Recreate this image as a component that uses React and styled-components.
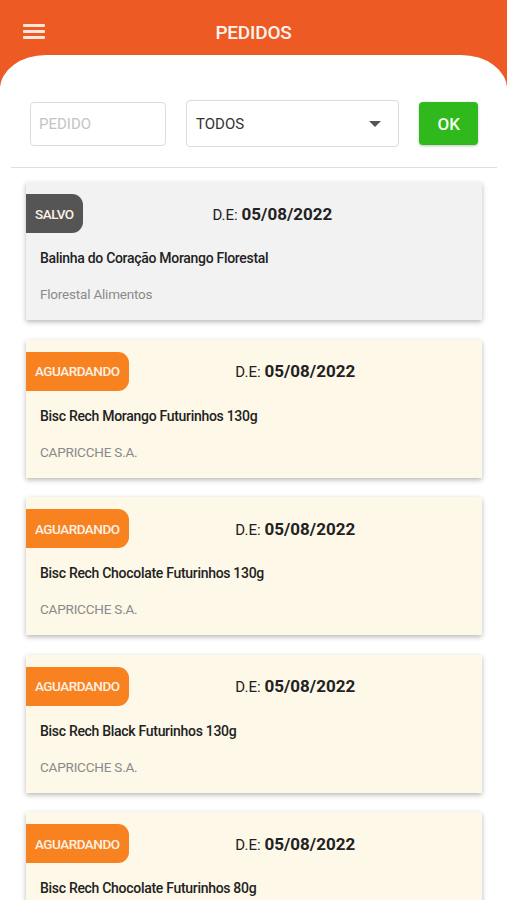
import React from "react";
import styled, { createGlobalStyle } from "styled-components";

const GlobalStyle = createGlobalStyle`
  html, body {
    margin: 0;
    padding: 0;
    background: #ffffff;
  }
  body {
    font-family: Roboto, "Noto Sans", sans-serif;
  }
  * {
    box-sizing: border-box;
  }
`;

const orders = [
  { status: "SALVO", date: "05/08/2022", product: "Balinha do Coração Morango Florestal", company: "Florestal Alimentos" },
  { status: "AGUARDANDO", date: "05/08/2022", product: "Bisc Rech Morango Futurinhos 130g", company: "CAPRICCHE S.A." },
  { status: "AGUARDANDO", date: "05/08/2022", product: "Bisc Rech Chocolate Futurinhos 130g", company: "CAPRICCHE S.A." },
  { status: "AGUARDANDO", date: "05/08/2022", product: "Bisc Rech Black Futurinhos 130g", company: "CAPRICCHE S.A." },
  { status: "AGUARDANDO", date: "05/08/2022", product: "Bisc Rech Chocolate Futurinhos 80g", company: "CAPRICCHE S.A." },
];

const App = () => {
  return (
    <>
      <GlobalStyle />
      <Page>
        <TopBar>
          <MenuButton aria-label="menu">
            <span />
            <span />
            <span />
          </MenuButton>
          <Title>PEDIDOS</Title>
        </TopBar>
        <Sheet>
          <Filters>
            <OrderInput placeholder="PEDIDO" />
            <Select>
              <span>TODOS</span>
              <Caret />
            </Select>
            <OkButton>OK</OkButton>
          </Filters>
          <Divider />
          <List>
            {orders.map((order, i) => (
              <Card key={i} $saved={order.status === "SALVO"}>
                <CardHead>
                  <Badge $saved={order.status === "SALVO"}>{order.status}</Badge>
                  <DateLine>
                    <small>D.E:</small> <strong>{order.date}</strong>
                  </DateLine>
                </CardHead>
                <Product>{order.product}</Product>
                <Company>{order.company}</Company>
              </Card>
            ))}
          </List>
        </Sheet>
      </Page>
    </>
  );
};

const Page = styled.div`
  height: 900px;
  overflow: hidden;
  background: #ee5a24;
  display: flex;
  flex-direction: column;
`;

const TopBar = styled.header`
  flex-shrink: 0;
  height: 55px;
  padding-top: 9px;
  display: flex;
  align-items: center;
  position: relative;
`;

const MenuButton = styled.div`
  position: absolute;
  left: 23px;
  top: 24px;
  display: flex;
  flex-direction: column;
  gap: 3px;
  span {
    display: block;
    width: 22px;
    height: 3px;
    border-radius: 1px;
    background: #fde7dc;
  }
`;

const Title = styled.h1`
  flex: 1;
  margin: 0;
  text-align: center;
  color: #fff4ee;
  font-size: 19px;
  font-weight: 500;
  letter-spacing: -0.2px;
`;

const Sheet = styled.main`
  flex-shrink: 0;
  background: #ffffff;
  border-radius: 46px 46px 0 0 / 34px 34px 0 0;
  padding-top: 45px;
`;

const Filters = styled.div`
  display: flex;
  align-items: center;
  padding: 0 29px 0 30px;
  gap: 20px;
`;

const OrderInput = styled.input`
  width: 136px;
  height: 44px;
  border: 1.5px solid #dcdcdc;
  border-radius: 4px;
  padding: 0 8px;
  font-family: Roboto, sans-serif;
  font-size: 15px;
  color: #333;
  outline: none;
  &::placeholder {
    color: #c4c4c4;
  }
`;

const Select = styled.div`
  width: 215px;
  height: 47px;
  border: 1.5px solid #dcdcdc;
  border-radius: 4px;
  padding: 0 17px 0 9px;
  display: flex;
  align-items: center;
  justify-content: space-between;
  font-size: 15px;
  color: #333;
`;

const Caret = styled.span`
  width: 0;
  height: 0;
  border-left: 6px solid transparent;
  border-right: 6px solid transparent;
  border-top: 6px solid #555;
`;

const OkButton = styled.button`
  width: 59px;
  height: 43px;
  border: none;
  border-radius: 4px;
  background: #2fb91c;
  color: #f4fff0;
  font-family: Roboto, sans-serif;
  font-size: 17px;
  font-weight: 500;
  box-shadow: 0 1px 3px rgba(0, 0, 0, 0.25);
`;

const Divider = styled.hr`
  margin: 20px 10px 0 11px;
  border: none;
  border-top: 1px solid #dedede;
`;

const List = styled.div`
  display: flex;
  flex-direction: column;
  gap: 19.5px;
  padding: 14px 25px 0 26px;
`;

const Card = styled.article`
  height: 138px;
  background: ${(p) => (p.$saved ? "#f2f2f2" : "#fdf8e8")};
  box-shadow: 0 2px 5px rgba(0, 0, 0, 0.28);
  padding-top: 12px;
  display: flex;
  flex-direction: column;
`;

const CardHead = styled.div`
  display: flex;
  align-items: center;
  height: 39px;
`;

const Badge = styled.span`
  height: 39px;
  padding: 0 9px 0 9px;
  display: flex;
  align-items: center;
  border-radius: 0 11px 11px 0;
  background: ${(p) => (p.$saved ? "#555555" : "#f7821f")};
  color: #fdf1e6;
  font-size: 13.5px;
  font-weight: 500;
  letter-spacing: -0.5px;
`;

const DateLine = styled.div`
  flex: 1;
  text-align: center;
  padding-right: 20px;
  color: #222;
  small {
    font-size: 15px;
  }
  strong {
    font-size: 17px;
    font-weight: 700;
  }
`;

const Product = styled.div`
  margin-top: 15px;
  padding-left: 14px;
  line-height: 20px;
  font-size: 14px;
  font-weight: 500;
  color: #222;
  letter-spacing: -0.3px;
`;

const Company = styled.div`
  margin-top: 16px;
  padding-left: 14px;
  line-height: 20px;
  font-size: 13.5px;
  color: #8a8a8a;
  letter-spacing: -0.2px;
`;

export default App;
